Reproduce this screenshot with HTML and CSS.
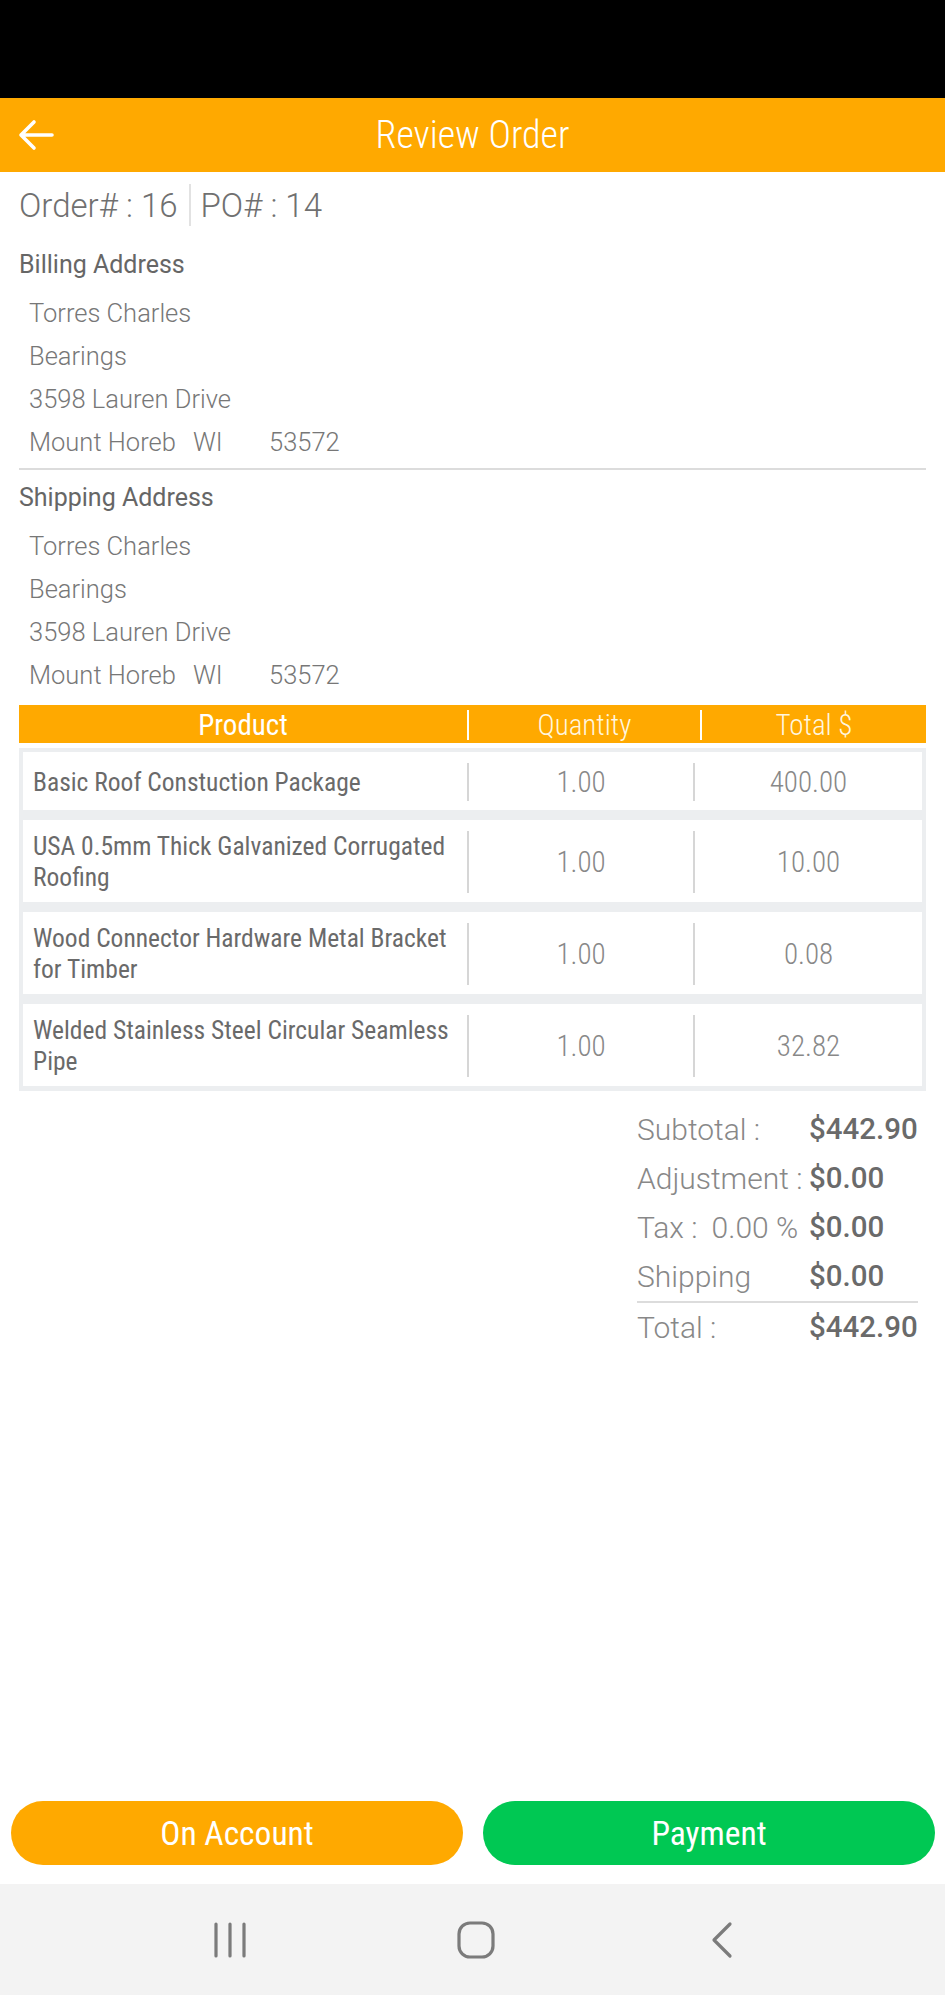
FILE: index.html
```html
<!DOCTYPE html>
<html lang="en">
<head>
<meta charset="utf-8">
<title>Review Order</title>
<link rel="stylesheet" href="styles.css">
</head>
<body>
<div class="status"></div>
<header class="appbar">
  <button class="back" aria-label="Back">
    <svg width="38" height="32" viewBox="0 0 38 32"><path d="M35 16H4M17 3L4 16l13 13" fill="none" stroke="#fff" stroke-width="3.6" stroke-linecap="round" stroke-linejoin="round"/></svg>
  </button>
  <h1 class="title">Review Order</h1>
  <span></span>
</header>
<main class="content">
  <div class="order-row">
    <span>Order# : 16</span>
    <span class="vsep"></span>
    <span>PO# : 14</span>
  </div>

  <section class="address">
    <h2>Billing Address</h2>
    <p>Torres Charles</p>
    <p>Bearings</p>
    <p>3598 Lauren Drive</p>
    <p><span class="city">Mount Horeb</span><span class="state">WI</span><span>53572</span></p>
  </section>
  <hr class="rule">
  <section class="address">
    <h2>Shipping Address</h2>
    <p>Torres Charles</p>
    <p>Bearings</p>
    <p>3598 Lauren Drive</p>
    <p><span class="city">Mount Horeb</span><span class="state">WI</span><span>53572</span></p>
  </section>

  <div class="table">
    <div class="thead">
      <div class="th th-product">Product</div>
      <div class="th">Quantity</div>
      <div class="th">Total $</div>
    </div>
    <div class="tbody">
      <div class="trow">
        <div class="td-product">Basic Roof Constuction Package</div>
        <div class="td-num">1.00</div>
        <div class="td-num">400.00</div>
      </div>
      <div class="trow">
        <div class="td-product">USA 0.5mm Thick Galvanized Corrugated Roofing</div>
        <div class="td-num">1.00</div>
        <div class="td-num">10.00</div>
      </div>
      <div class="trow">
        <div class="td-product">Wood Connector Hardware Metal Bracket for Timber</div>
        <div class="td-num">1.00</div>
        <div class="td-num">0.08</div>
      </div>
      <div class="trow">
        <div class="td-product">Welded Stainless Steel Circular Seamless Pipe</div>
        <div class="td-num">1.00</div>
        <div class="td-num">32.82</div>
      </div>
    </div>
  </div>

  <div class="totals">
    <span class="t-label">Subtotal :</span><span class="t-value">$442.90</span>
    <span class="t-label">Adjustment :</span><span class="t-value">$0.00</span>
    <span class="t-label">Tax :<span class="tax-rate">0.00 %</span></span><span class="t-value">$0.00</span>
    <span class="t-label">Shipping</span><span class="t-value">$0.00</span>
    <span class="t-rule"></span>
    <span class="t-label">Total :</span><span class="t-value">$442.90</span>
  </div>
</main>

<div class="actions">
  <button class="btn btn-account">On Account</button>
  <button class="btn btn-pay">Payment</button>
</div>

<nav class="sysnav">
  <span class="navicon">
    <svg width="34" height="36" viewBox="0 0 34 36"><path d="M3 2v32M17 2v32M31 2v32" stroke="#7b7b7b" stroke-width="3.2" stroke-linecap="round"/></svg>
  </span>
  <span class="navicon">
    <svg width="38" height="38" viewBox="0 0 38 38"><rect x="2" y="2" width="34" height="34" rx="11" fill="none" stroke="#7b7b7b" stroke-width="3.2"/></svg>
  </span>
  <span class="navicon">
    <svg width="24" height="38" viewBox="0 0 24 38"><path d="M20 3L4 19l16 16" fill="none" stroke="#7b7b7b" stroke-width="3.2" stroke-linecap="round" stroke-linejoin="round"/></svg>
  </span>
</nav>
</body>
</html>
```
FILE: styles.css
```css
html, body {
  margin: 0;
  padding: 0;
  height: 100%;
}
body {
  width: 945px;
  min-height: 1995px;
  display: flex;
  flex-direction: column;
  background: #fff;
  font-family: Roboto, "Liberation Sans", sans-serif;
  color: #666;
}
.status {
  height: 98px;
  background: #000;
  flex: none;
}
.appbar {
  height: 74px;
  flex: none;
  background: #ffa900;
  display: grid;
  grid-template-columns: 1fr auto 1fr;
  align-items: center;
}
.back {
  border: 0;
  background: none;
  padding: 0 0 0 17px;
  margin: 0;
  display: flex;
  align-items: center;
  justify-self: start;
  cursor: pointer;
}
.title {
  margin: 0;
  font-family: "Roboto Condensed", "Liberation Sans Narrow", Roboto, sans-serif;
  font-weight: 300;
  font-size: 38px;
  color: #fff;
}
.content {
  flex: 1;
  padding: 0 19px;
}
.order-row {
  height: 66px;
  display: flex;
  align-items: center;
  font-weight: 300;
  font-size: 33px;
  color: #707070;
}
.vsep {
  width: 2px;
  height: 42px;
  background: #e2e2e2;
  margin: 0 10px 0 11px;
}
.address h2 {
  margin: 0;
  height: 54px;
  line-height: 54px;
  font-weight: 400;
  font-size: 25px;
  color: #666;
}
.address p {
  margin: 0;
  padding-left: 10px;
  line-height: 43px;
  font-weight: 300;
  font-size: 25.5px;
  color: #777;
}
.city {
  display: inline-block;
  width: 164px;
}
.state {
  display: inline-block;
  width: 76px;
}
.rule {
  border: 0;
  height: 2px;
  background: #dcdcdc;
  margin: 4px 0 1px;
}
.table {
  margin-top: 8px;
}
.thead {
  display: grid;
  grid-template-columns: 448px 233px 1fr;
  background: #ffa900;
  padding: 5px 0 3px;
  font-family: "Roboto Condensed", "Liberation Sans Narrow", Roboto, sans-serif;
  font-size: 29px;
  line-height: 30px;
  color: #fff;
}
.th {
  text-align: center;
  border-left: 2px solid #fff;
  font-weight: 300;
  color: #fff6df;
}
.th-product {
  border-left: 0;
  font-weight: 400;
  color: #fff;
}
.tbody {
  margin-top: 5px;
  background: #eceef0;
  padding: 4px 4px 5px;
  display: flex;
  flex-direction: column;
  gap: 10px;
}
.trow {
  display: grid;
  grid-template-columns: 444px 226px 1fr;
  background: #fff;
  padding: 11px 0 9px;
  min-height: 38px;
  font-family: "Roboto Condensed", "Liberation Sans Narrow", Roboto, sans-serif;
}
.td-product {
  padding: 0 4px 0 10px;
  font-size: 25.5px;
  line-height: 31px;
  color: #6a6a6a;
  display: flex;
  align-items: center;
}
.td-num {
  border-left: 2px solid #d6d6d6;
  display: flex;
  align-items: center;
  justify-content: center;
  font-weight: 300;
  font-size: 29px;
  color: #888;
}
.totals {
  margin: 14px 10px 0 auto;
  width: 279px;
  display: grid;
  grid-template-columns: 172px 1fr;
  font-size: 30px;
  line-height: 49px;
}
.t-label {
  font-weight: 300;
  color: #888;
  white-space: nowrap;
}
.tax-rate {
  margin-left: 14px;
}
.t-value {
  font-weight: 500;
  font-size: 29.5px;
  color: #6a6a6a;
}
.t-rule {
  grid-column: 1 / -1;
  height: 2px;
  background: #dcdcdc;
}
.actions {
  flex: none;
  display: grid;
  grid-template-columns: 1fr 1fr;
  gap: 20px;
  padding: 0 10px 19px 11px;
}
.btn {
  height: 64px;
  border: 0;
  border-radius: 32px;
  color: #fff;
  font-family: "Roboto Condensed", "Liberation Sans Narrow", Roboto, sans-serif;
  font-size: 33.5px;
  cursor: pointer;
}
.btn-account {
  background: #ffa900;
}
.btn-pay {
  background: #00c853;
}
.sysnav {
  flex: none;
  height: 111px;
  background: #f3f3f3;
  display: grid;
  grid-template-columns: 246px 246px 246px;
  justify-content: center;
  align-items: center;
  padding-left: 6px;
}
.navicon {
  display: flex;
  justify-content: center;
  align-items: center;
  height: 111px;
}
```
